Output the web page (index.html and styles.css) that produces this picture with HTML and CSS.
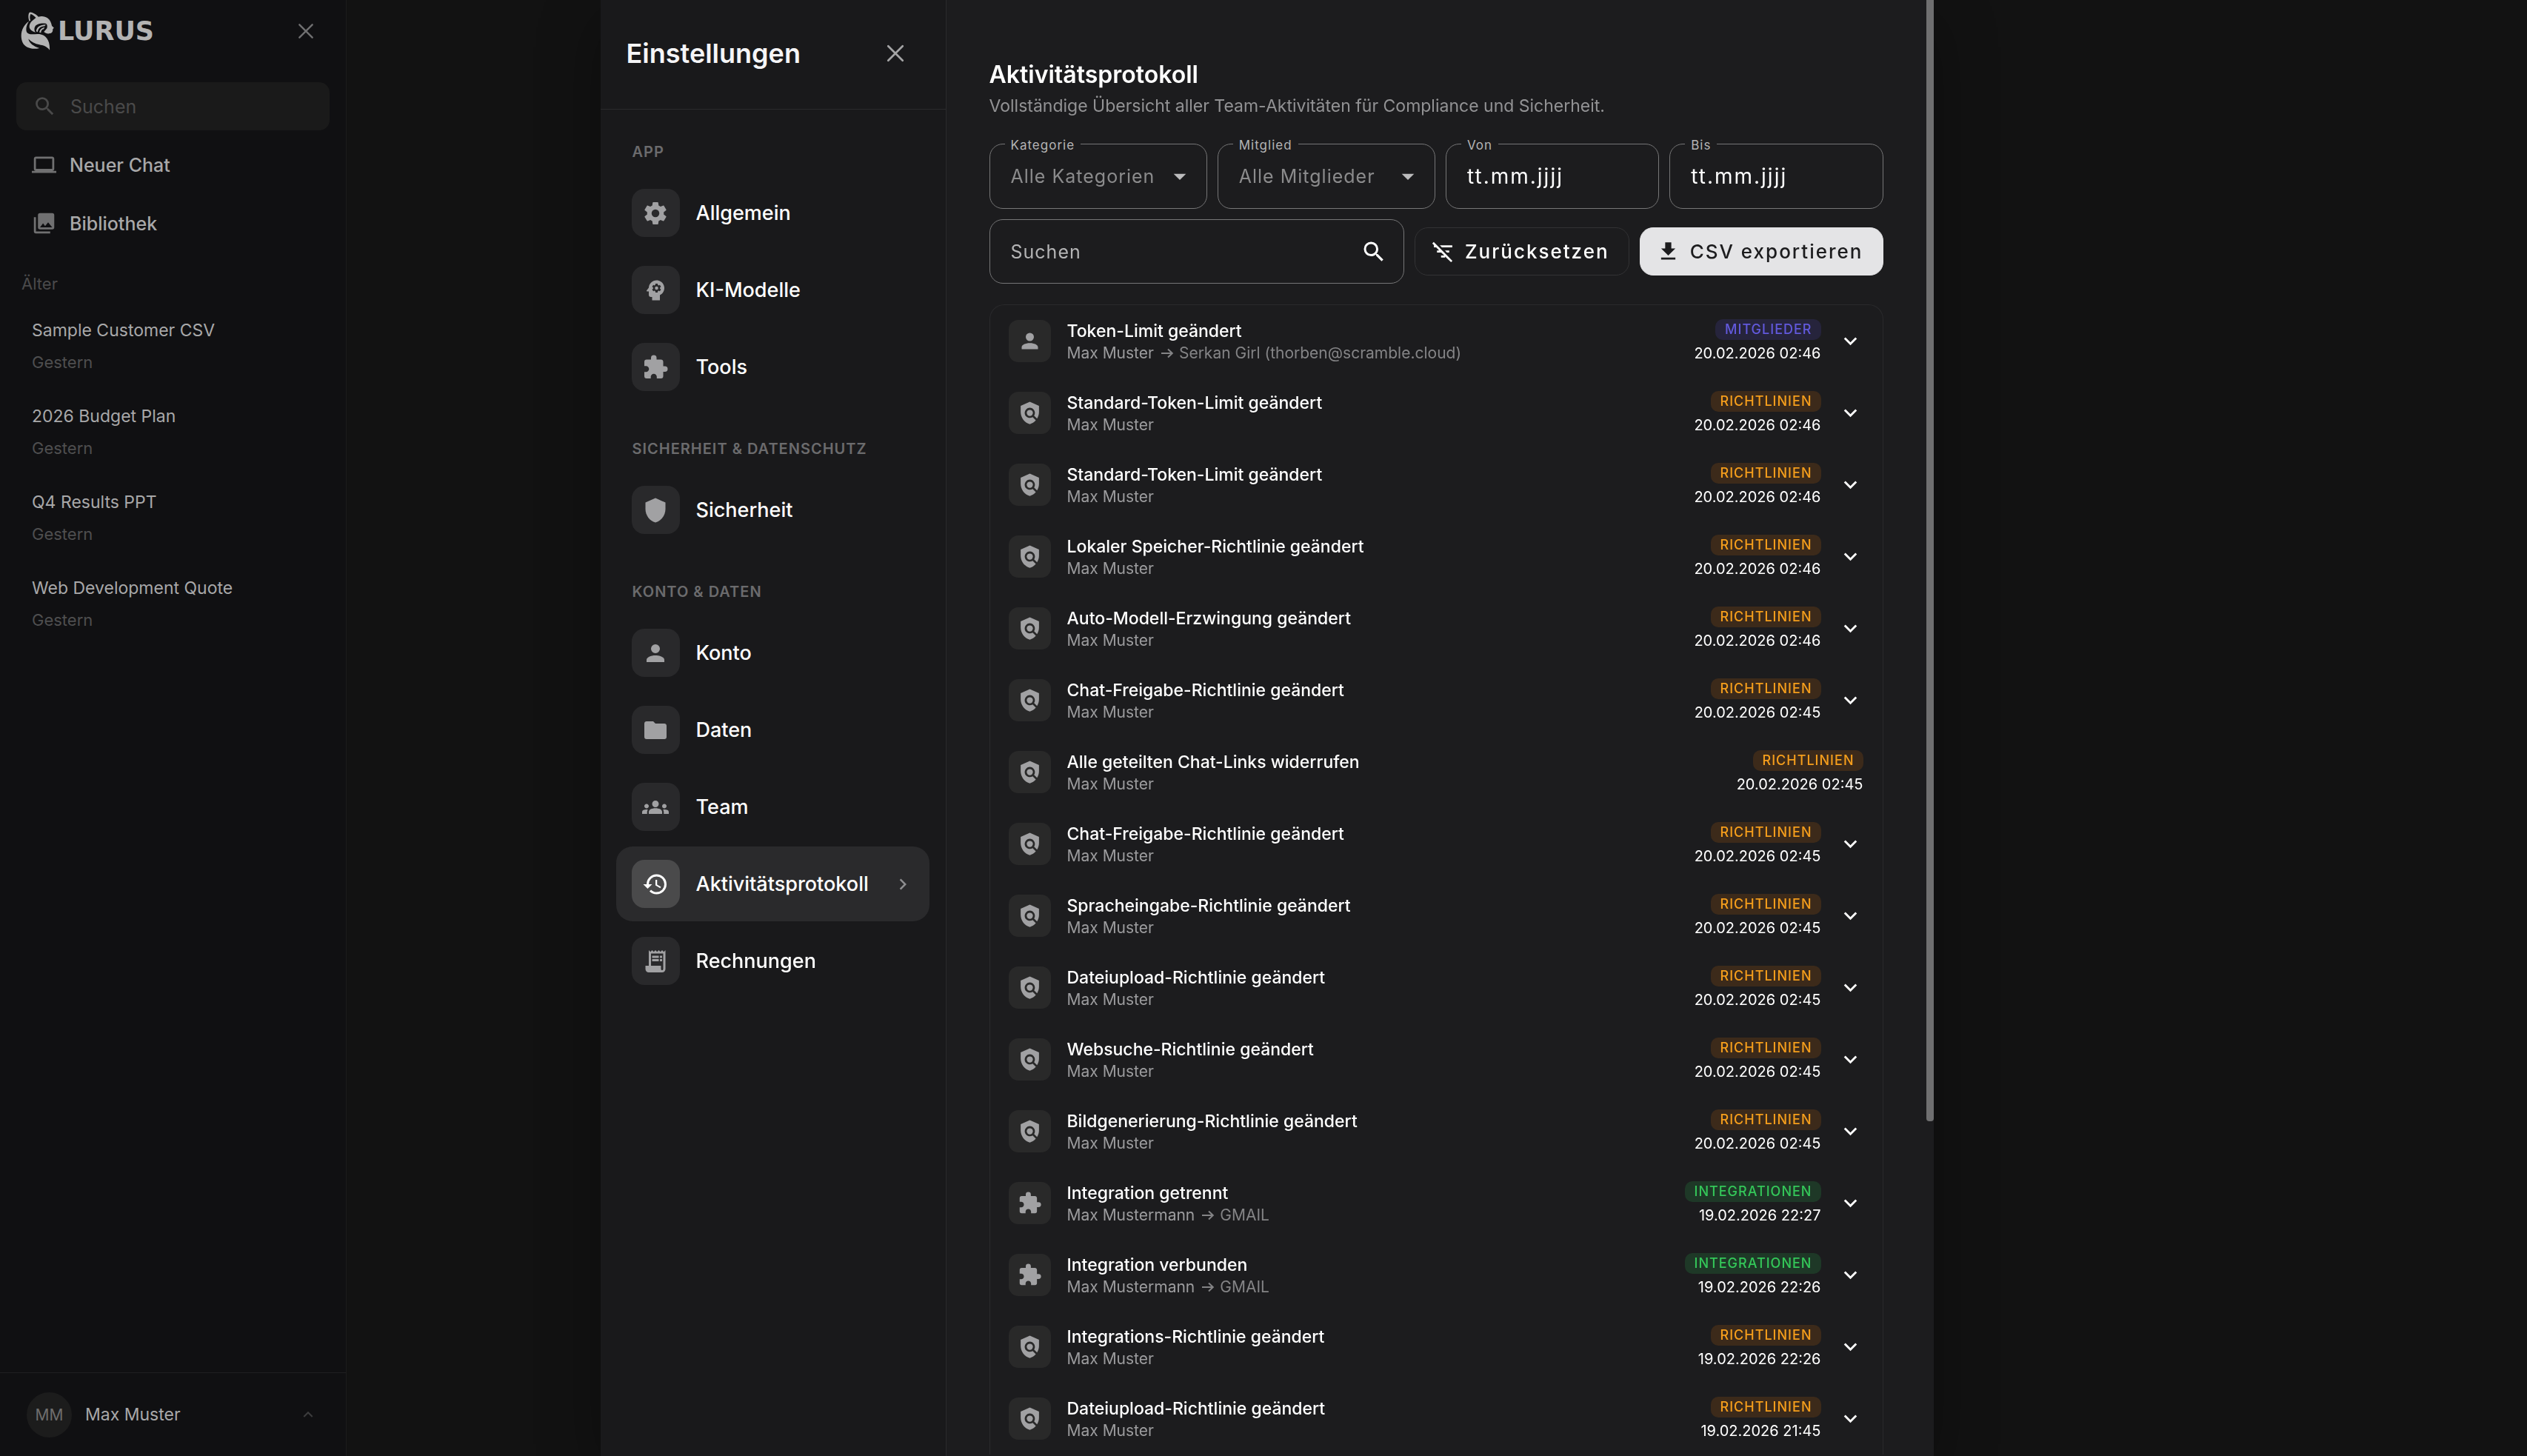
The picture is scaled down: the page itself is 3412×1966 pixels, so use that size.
FILE: index.html
```html
<!DOCTYPE html>
<html lang="de">
<head>
    <meta charset="UTF-8">
    <meta name="viewport" content="width=device-width, initial-scale=1.0">
    <title>Einstellungen - Aktivitätsprotokoll</title>
    <link rel="stylesheet" href="styles.css">
</head>
<body>
    <!-- Icon sprite -->
    <svg class="sprite" aria-hidden="true">
        <symbol id="i-close" viewBox="0 0 24 24"><path d="M5.5 5.5l13 13M18.5 5.5l-13 13" fill="none" stroke="currentColor" stroke-width="1.8" stroke-linecap="round"/></symbol>
        <symbol id="i-search" viewBox="0 0 24 24"><path d="M9.5,3A6.5,6.5 0 0,1 16,9.5C16,11.11 15.41,12.59 14.44,13.73L14.71,14H15.5L20.5,19L19,20.5L14,15.5V14.71L13.73,14.44C12.59,15.41 11.11,16 9.5,16A6.5,6.5 0 0,1 3,9.5A6.5,6.5 0 0,1 9.5,3M9.5,5C7,5 5,7 5,9.5C5,12 7,14 9.5,14C12,14 14,12 14,9.5C14,7 12,5 9.5,5Z"/></symbol>
        <symbol id="i-laptop" viewBox="0 0 24 24"><path d="M4,6H20V16H4M20,18A2,2 0 0,0 22,16V6C22,4.89 21.1,4 20,4H4C2.89,4 2,4.89 2,6V16A2,2 0 0,0 4,18H0V20H24V18H20Z"/></symbol>
        <symbol id="i-images" viewBox="0 0 24 24"><path d="M22,16V4A2,2 0 0,0 20,2H8A2,2 0 0,0 6,4V16A2,2 0 0,0 8,18H20A2,2 0 0,0 22,16M11,12L13.03,14.71L16,11L20,16H8M2,6V20A2,2 0 0,0 4,22H18V20H4V6"/></symbol>
        <symbol id="i-cog" viewBox="0 0 24 24"><path d="M12,15.5A3.5,3.5 0 0,1 8.5,12A3.5,3.5 0 0,1 12,8.5A3.5,3.5 0 0,1 15.5,12A3.5,3.5 0 0,1 12,15.5M19.43,12.97C19.47,12.65 19.5,12.33 19.5,12C19.5,11.67 19.47,11.34 19.43,11L21.54,9.37C21.73,9.22 21.78,8.95 21.66,8.73L19.66,5.27C19.54,5.05 19.27,4.96 19.05,5.05L16.56,6.05C16.04,5.66 15.5,5.32 14.87,5.07L14.5,2.42C14.46,2.18 14.25,2 14,2H10C9.75,2 9.54,2.18 9.5,2.42L9.13,5.07C8.5,5.32 7.96,5.66 7.44,6.05L4.95,5.05C4.73,4.96 4.46,5.05 4.34,5.27L2.34,8.73C2.21,8.95 2.27,9.22 2.46,9.37L4.57,11C4.53,11.34 4.5,11.67 4.5,12C4.5,12.33 4.53,12.65 4.57,12.97L2.46,14.63C2.27,14.78 2.21,15.05 2.34,15.27L4.34,18.73C4.46,18.95 4.73,19.03 4.95,18.95L7.44,17.94C7.96,18.34 8.5,18.68 9.13,18.93L9.5,21.58C9.54,21.82 9.75,22 10,22H14C14.25,22 14.46,21.82 14.5,21.58L14.87,18.93C15.5,18.67 16.04,18.34 16.56,17.94L19.05,18.95C19.27,19.03 19.54,18.95 19.66,18.73L21.66,15.27C21.78,15.05 21.73,14.78 21.54,14.63L19.43,12.97Z"/></symbol>
        <symbol id="i-head" viewBox="0 0 24 24"><path fill-rule="evenodd" d="M13,3C9.23,3 6.19,5.95 6,9.66L4.08,12.19C3.84,12.5 4.08,13 4.5,13H6V16A2,2 0 0,0 8,18H9V21H16V16.31C18.37,15.19 20,12.8 20,10C20,6.14 16.88,3 13,3M16,10C16,10.13 16,10.26 16,10.39L16.83,11.05C16.91,11.11 16.93,11.21 16.88,11.3L16.08,12.69C16.03,12.78 15.93,12.81 15.84,12.78L14.84,12.38C14.63,12.54 14.41,12.67 14.16,12.77L14,13.83C14,13.93 13.91,14 13.81,14H12.19C12.09,14 12,13.93 12,13.83L11.84,12.77C11.59,12.67 11.37,12.54 11.16,12.38L10.16,12.78C10.07,12.81 9.97,12.78 9.92,12.69L9.12,11.3C9.07,11.21 9.09,11.11 9.17,11.05L10,10.39C10,10.26 10,10.13 10,10C10,9.87 10,9.74 10,9.61L9.17,8.95C9.09,8.89 9.07,8.79 9.12,8.7L9.92,7.31C9.97,7.22 10.07,7.19 10.16,7.22L11.16,7.62C11.37,7.46 11.59,7.33 11.84,7.23L12,6.17C12,6.07 12.09,6 12.19,6H13.81C13.91,6 14,6.07 14,6.17L14.16,7.23C14.41,7.33 14.63,7.46 14.84,7.62L15.84,7.22C15.93,7.19 16.03,7.22 16.08,7.31L16.88,8.7C16.93,8.79 16.91,8.89 16.83,8.95L16,9.61C16,9.74 16,9.87 16,10M14.5,10A1.5,1.5 0 1,0 11.5,10A1.5,1.5 0 1,0 14.5,10Z"/></symbol>
        <symbol id="i-puzzle" viewBox="0 0 24 24"><path d="M20.5,11H19V7C19,5.89 18.1,5 17,5H13V3.5A2.5,2.5 0 0,0 10.5,1A2.5,2.5 0 0,0 8,3.5V5H4A2,2 0 0,0 2,7V10.8H3.5C5,10.8 6.2,12 6.2,13.5C6.2,15 5,16.2 3.5,16.2H2V20A2,2 0 0,0 4,22H7.8V20.5C7.8,19 9,17.8 10.5,17.8C12,17.8 13.2,19 13.2,20.5V22H17A2,2 0 0,0 19,20V16H20.5A2.5,2.5 0 0,0 23,13.5A2.5,2.5 0 0,0 20.5,11Z"/></symbol>
        <symbol id="i-shield" viewBox="0 0 24 24"><path d="M12,1L3,5V11C3,16.55 6.84,21.74 12,23C17.16,21.74 21,16.55 21,11V5L12,1Z"/></symbol>
        <symbol id="i-account" viewBox="0 0 24 24"><path d="M12,4A4,4 0 0,1 16,8A4,4 0 0,1 12,12A4,4 0 0,1 8,8A4,4 0 0,1 12,4M12,14C16.42,14 20,15.79 20,18V20H4V18C4,15.79 7.58,14 12,14Z"/></symbol>
        <symbol id="i-folder" viewBox="0 0 24 24"><path d="M10,4H4C2.89,4 2,4.89 2,6V18A2,2 0 0,0 4,20H20A2,2 0 0,0 22,18V8C22,6.89 21.1,6 20,6H12L10,4Z"/></symbol>
        <symbol id="i-groups" viewBox="0 0 24 24"><path d="M12 12.75c1.63 0 3.07.39 4.24.9 1.08.48 1.76 1.56 1.76 2.73V18H6v-1.61c0-1.18.68-2.26 1.76-2.73 1.17-.52 2.61-.91 4.24-.91zM4 13c1.1 0 2-.9 2-2s-.9-2-2-2-2 .9-2 2 .9 2 2 2zm1.13 1.1c-.37-.06-.74-.1-1.13-.1-.99 0-1.93.21-2.78.58C.48 14.9 0 15.62 0 16.43V18h4.5v-1.61c0-.83.23-1.61.63-2.29zM20 13c1.1 0 2-.9 2-2s-.9-2-2-2-2 .9-2 2 .9 2 2 2zm4 3.43c0-.81-.48-1.53-1.22-1.85-.85-.37-1.79-.58-2.78-.58-.39 0-.76.04-1.13.1.4.68.63 1.46.63 2.29V18H24v-1.57zM12 6c1.66 0 3 1.34 3 3s-1.34 3-3 3-3-1.34-3-3 1.34-3 3-3z"/></symbol>
        <symbol id="i-history" viewBox="0 0 24 24"><path d="M13.5,8H12V13L16.28,15.54L17,14.33L13.5,12.25V8M13,3A9,9 0 0,0 4,12H1L4.96,16.03L9,12H6A7,7 0 0,1 13,5A7,7 0 0,1 20,12A7,7 0 0,1 13,19C11.07,19 9.32,18.21 8.06,16.94L6.64,18.36C8.27,20 10.5,21 13,21A9,9 0 0,0 22,12A9,9 0 0,0 13,3"/></symbol>
        <symbol id="i-receipt" viewBox="0 0 24 24"><path d="M19.5 3.5L18 2l-1.5 1.5L15 2l-1.5 1.5L12 2l-1.5 1.5L9 2 7.5 3.5 6 2v14H3v3c0 1.66 1.34 3 3 3h12c1.66 0 3-1.34 3-3V2l-1.5 1.5zM19 19c0 .55-.45 1-1 1s-1-.45-1-1v-3H8V5h11v14zM9 7h6v2H9zM16 7h2v2h-2zM9 10h6v2H9zM16 10h2v2h-2z"/></symbol>
        <symbol id="i-policy" viewBox="0 0 24 24"><path d="M21 5l-9-4-9 4v6c0 5.55 3.84 10.74 9 12 2.3-.56 4.33-1.9 5.88-3.71l-3.12-3.12c-1.94 1.29-4.58 1.07-6.29-.64-1.95-1.95-1.95-5.12 0-7.07 1.95-1.95 5.12-1.95 7.07 0 1.71 1.71 1.92 4.35.64 6.29l2.9 2.9C20.29 15.69 21 13.38 21 11V5z"/><circle cx="12" cy="12" r="3"/></symbol>
        <symbol id="i-chevron-right" viewBox="0 0 24 24"><path d="M8.59,16.58L13.17,12L8.59,7.41L10,6L16,12L10,18L8.59,16.58Z"/></symbol>
        <symbol id="i-chevron-down" viewBox="0 0 24 24"><path d="M7.41,8.58L12,13.17L16.59,8.58L18,10L12,16L6,10L7.41,8.58Z"/></symbol>
        <symbol id="i-chevron-up" viewBox="0 0 24 24"><path d="M7.41,15.41L12,10.83L16.59,15.41L18,14L12,8L6,14L7.41,15.41Z"/></symbol>
        <symbol id="i-menu-down" viewBox="0 0 24 24"><path d="M7,10L12,15L17,10H7Z"/></symbol>
        <symbol id="i-filter-off" viewBox="0 0 24 24"><path d="M10.83 8H21V6H8.83l2 2zm5 5H18v-2h-4.17l2 2zM14 16.83V18h-4v-2h3.17l-3-3H6v-2h2.17l-3-3H3V6h.17L1.39 4.22 2.8 2.81l18.38 18.38-1.41 1.41L14 16.83z"/></symbol>
        <symbol id="i-download" viewBox="0 0 24 24"><path d="M5,20H19V18H5M19,9H15V3H9V9H5L12,16L19,9Z"/></symbol>
        <symbol id="i-arrow" viewBox="0 0 18 16"><path d="M1 8h15M10 2.5L15.8 8 10 13.5" fill="none" stroke="currentColor" stroke-width="2"/></symbol>
    </svg>

    <div class="app">
        <!-- Chat sidebar -->
        <aside class="sidebar">
            <div class="sidebar-header">
                <a class="logo" href="#">
                    <svg class="logo-mark" viewBox="86 50 132 154" aria-hidden="true">
                        <path fill-rule="evenodd" d="M120 88C115 76 115 61 119 54C121 50 126 51 131 53C142 57 150 63 156 70C168 65 184 68 193 75C203 83 207 92 210 106L218 114L213 120C215 128 210 135 202 136C194 139 185 136 178 130L190 116C193 108 191 99 185 97C170 93 150 99 144 106C138 114 139 124 144 132C131 128 122 121 120 112C119 103 123 94 129 88L146 74C140 66 131 60 125 59C121 66 121 76 124 84Z"/>
                        <path d="M147 128C148 112 162 101 186 101L180 108C166 108 155 115 153 131ZM160 132C161 121 169 114 181 112L177 119C170 120 167 125 166 134Z"/>
                        <path d="M118 88C108 104 104 122 110 132C120 145 140 137 160 139C186 142 203 164 201 203C190 187 174 184 160 181C143 178 127 170 116 158C120 176 137 188 160 195C132 202 103 194 93 173C80 143 90 107 118 88Z"/>
                    </svg>
                    <span class="logo-text">LURUS</span>
                </a>
                <button class="icon-button" type="button" aria-label="Seitenleiste schließen"><svg class="icon-close"><use href="#i-close"/></svg></button>
            </div>

            <label class="sidebar-search">
                <svg class="icon"><use href="#i-search"/></svg>
                <input type="text" placeholder="Suchen" aria-label="Chats durchsuchen">
            </label>

            <nav class="main-nav">
                <a href="#"><svg class="icon"><use href="#i-laptop"/></svg>Neuer Chat</a>
                <a href="#"><svg class="icon"><use href="#i-images"/></svg>Bibliothek</a>
            </nav>

            <h3 class="history-label">Älter</h3>
            <nav class="history">
                <a href="#"><span class="history-title">Sample Customer CSV</span><span class="history-date">Gestern</span></a>
                <a href="#"><span class="history-title">2026 Budget Plan</span><span class="history-date">Gestern</span></a>
                <a href="#"><span class="history-title">Q4 Results PPT</span><span class="history-date">Gestern</span></a>
                <a href="#"><span class="history-title">Web Development Quote</span><span class="history-date">Gestern</span></a>
            </nav>

            <button class="user" type="button">
                <span class="avatar">MM</span>
                <span class="user-name">Max Muster</span>
                <svg class="icon-up"><use href="#i-chevron-up"/></svg>
            </button>
        </aside>
        <main class="chat"></main>
    </div>

    <!-- Settings dialog -->
    <div class="overlay">
        <div class="modal" role="dialog" aria-labelledby="settings-title">
            <div class="settings">
                <div class="settings-header">
                    <h1 id="settings-title">Einstellungen</h1>
                    <button class="icon-button" type="button" aria-label="Schließen"><svg class="icon-close"><use href="#i-close"/></svg></button>
                </div>
                <nav class="settings-nav">
                    <h2>APP</h2>
                    <a href="#"><span class="tile"><svg class="icon"><use href="#i-cog"/></svg></span>Allgemein</a>
                    <a href="#"><span class="tile"><svg class="icon"><use href="#i-head"/></svg></span>KI-Modelle</a>
                    <a href="#"><span class="tile"><svg class="icon"><use href="#i-puzzle"/></svg></span>Tools</a>
                    <h2>SICHERHEIT &amp; DATENSCHUTZ</h2>
                    <a href="#"><span class="tile"><svg class="icon"><use href="#i-shield"/></svg></span>Sicherheit</a>
                    <h2>KONTO &amp; DATEN</h2>
                    <a href="#"><span class="tile"><svg class="icon"><use href="#i-account"/></svg></span>Konto</a>
                    <a href="#"><span class="tile"><svg class="icon"><use href="#i-folder"/></svg></span>Daten</a>
                    <a href="#"><span class="tile"><svg class="icon"><use href="#i-groups"/></svg></span>Team</a>
                    <a href="#" class="active"><span class="tile"><svg class="icon"><use href="#i-history"/></svg></span>Aktivitätsprotokoll<svg class="icon-next"><use href="#i-chevron-right"/></svg></a>
                    <a href="#"><span class="tile"><svg class="icon"><use href="#i-receipt"/></svg></span>Rechnungen</a>
                </nav>
            </div>

            <div class="content">
                <h2 class="content-title">Aktivitätsprotokoll</h2>
                <p class="content-text">Vollständige Übersicht aller Team-Aktivitäten für Compliance und Sicherheit.</p>

                <form class="filters">
                    <div class="fields">
                        <div class="field">
                            <label for="category">Kategorie</label>
                            <select id="category"><option>Alle Kategorien</option></select>
                            <svg class="caret"><use href="#i-menu-down"/></svg>
                        </div>
                        <div class="field">
                            <label for="member">Mitglied</label>
                            <select id="member"><option>Alle Mitglieder</option></select>
                            <svg class="caret"><use href="#i-menu-down"/></svg>
                        </div>
                        <div class="field">
                            <label for="from">Von</label>
                            <input class="date" type="text" id="from" placeholder="tt.mm.jjjj">
                        </div>
                        <div class="field">
                            <label for="to">Bis</label>
                            <input class="date" type="text" id="to" placeholder="tt.mm.jjjj">
                        </div>
                    </div>
                    <div class="actions">
                        <div class="field search">
                            <input type="text" placeholder="Suchen" aria-label="Suchen">
                            <svg class="icon-search"><use href="#i-search"/></svg>
                        </div>
                        <button class="button" type="reset"><svg class="icon"><use href="#i-filter-off"/></svg>Zurücksetzen</button>
                        <button class="button primary" type="button"><svg class="icon"><use href="#i-download"/></svg>CSV exportieren</button>
                    </div>
                </form>

                <!-- Activity log -->
                <ul class="log">
                    <li>
                        <span class="log-icon"><svg class="icon"><use href="#i-account"/></svg></span>
                        <div class="log-text"><strong>Token-Limit geändert</strong><p>Max Muster <span class="target"><svg class="arrow"><use href="#i-arrow"/></svg> Serkan Girl (thorben@scramble.cloud)</span></p></div>
                        <div class="log-meta"><span class="badge members">MITGLIEDER</span><time>20.02.2026 02:46</time></div>
                        <button class="expand" type="button" aria-label="Details"><svg><use href="#i-chevron-down"/></svg></button>
                    </li>
                    <li>
                        <span class="log-icon"><svg class="icon"><use href="#i-policy"/></svg></span>
                        <div class="log-text"><strong>Standard-Token-Limit geändert</strong><p>Max Muster</p></div>
                        <div class="log-meta"><span class="badge policies">RICHTLINIEN</span><time>20.02.2026 02:46</time></div>
                        <button class="expand" type="button" aria-label="Details"><svg><use href="#i-chevron-down"/></svg></button>
                    </li>
                    <li>
                        <span class="log-icon"><svg class="icon"><use href="#i-policy"/></svg></span>
                        <div class="log-text"><strong>Standard-Token-Limit geändert</strong><p>Max Muster</p></div>
                        <div class="log-meta"><span class="badge policies">RICHTLINIEN</span><time>20.02.2026 02:46</time></div>
                        <button class="expand" type="button" aria-label="Details"><svg><use href="#i-chevron-down"/></svg></button>
                    </li>
                    <li>
                        <span class="log-icon"><svg class="icon"><use href="#i-policy"/></svg></span>
                        <div class="log-text"><strong>Lokaler Speicher-Richtlinie geändert</strong><p>Max Muster</p></div>
                        <div class="log-meta"><span class="badge policies">RICHTLINIEN</span><time>20.02.2026 02:46</time></div>
                        <button class="expand" type="button" aria-label="Details"><svg><use href="#i-chevron-down"/></svg></button>
                    </li>
                    <li>
                        <span class="log-icon"><svg class="icon"><use href="#i-policy"/></svg></span>
                        <div class="log-text"><strong>Auto-Modell-Erzwingung geändert</strong><p>Max Muster</p></div>
                        <div class="log-meta"><span class="badge policies">RICHTLINIEN</span><time>20.02.2026 02:46</time></div>
                        <button class="expand" type="button" aria-label="Details"><svg><use href="#i-chevron-down"/></svg></button>
                    </li>
                    <li>
                        <span class="log-icon"><svg class="icon"><use href="#i-policy"/></svg></span>
                        <div class="log-text"><strong>Chat-Freigabe-Richtlinie geändert</strong><p>Max Muster</p></div>
                        <div class="log-meta"><span class="badge policies">RICHTLINIEN</span><time>20.02.2026 02:45</time></div>
                        <button class="expand" type="button" aria-label="Details"><svg><use href="#i-chevron-down"/></svg></button>
                    </li>
                    <li>
                        <span class="log-icon"><svg class="icon"><use href="#i-policy"/></svg></span>
                        <div class="log-text"><strong>Alle geteilten Chat-Links widerrufen</strong><p>Max Muster</p></div>
                        <div class="log-meta"><span class="badge policies">RICHTLINIEN</span><time>20.02.2026 02:45</time></div>
                    </li>
                    <li>
                        <span class="log-icon"><svg class="icon"><use href="#i-policy"/></svg></span>
                        <div class="log-text"><strong>Chat-Freigabe-Richtlinie geändert</strong><p>Max Muster</p></div>
                        <div class="log-meta"><span class="badge policies">RICHTLINIEN</span><time>20.02.2026 02:45</time></div>
                        <button class="expand" type="button" aria-label="Details"><svg><use href="#i-chevron-down"/></svg></button>
                    </li>
                    <li>
                        <span class="log-icon"><svg class="icon"><use href="#i-policy"/></svg></span>
                        <div class="log-text"><strong>Spracheingabe-Richtlinie geändert</strong><p>Max Muster</p></div>
                        <div class="log-meta"><span class="badge policies">RICHTLINIEN</span><time>20.02.2026 02:45</time></div>
                        <button class="expand" type="button" aria-label="Details"><svg><use href="#i-chevron-down"/></svg></button>
                    </li>
                    <li>
                        <span class="log-icon"><svg class="icon"><use href="#i-policy"/></svg></span>
                        <div class="log-text"><strong>Dateiupload-Richtlinie geändert</strong><p>Max Muster</p></div>
                        <div class="log-meta"><span class="badge policies">RICHTLINIEN</span><time>20.02.2026 02:45</time></div>
                        <button class="expand" type="button" aria-label="Details"><svg><use href="#i-chevron-down"/></svg></button>
                    </li>
                    <li>
                        <span class="log-icon"><svg class="icon"><use href="#i-policy"/></svg></span>
                        <div class="log-text"><strong>Websuche-Richtlinie geändert</strong><p>Max Muster</p></div>
                        <div class="log-meta"><span class="badge policies">RICHTLINIEN</span><time>20.02.2026 02:45</time></div>
                        <button class="expand" type="button" aria-label="Details"><svg><use href="#i-chevron-down"/></svg></button>
                    </li>
                    <li>
                        <span class="log-icon"><svg class="icon"><use href="#i-policy"/></svg></span>
                        <div class="log-text"><strong>Bildgenerierung-Richtlinie geändert</strong><p>Max Muster</p></div>
                        <div class="log-meta"><span class="badge policies">RICHTLINIEN</span><time>20.02.2026 02:45</time></div>
                        <button class="expand" type="button" aria-label="Details"><svg><use href="#i-chevron-down"/></svg></button>
                    </li>
                    <li>
                        <span class="log-icon"><svg class="icon"><use href="#i-puzzle"/></svg></span>
                        <div class="log-text"><strong>Integration getrennt</strong><p>Max Mustermann <span class="target"><svg class="arrow"><use href="#i-arrow"/></svg> GMAIL</span></p></div>
                        <div class="log-meta"><span class="badge integrations">INTEGRATIONEN</span><time>19.02.2026 22:27</time></div>
                        <button class="expand" type="button" aria-label="Details"><svg><use href="#i-chevron-down"/></svg></button>
                    </li>
                    <li>
                        <span class="log-icon"><svg class="icon"><use href="#i-puzzle"/></svg></span>
                        <div class="log-text"><strong>Integration verbunden</strong><p>Max Mustermann <span class="target"><svg class="arrow"><use href="#i-arrow"/></svg> GMAIL</span></p></div>
                        <div class="log-meta"><span class="badge integrations">INTEGRATIONEN</span><time>19.02.2026 22:26</time></div>
                        <button class="expand" type="button" aria-label="Details"><svg><use href="#i-chevron-down"/></svg></button>
                    </li>
                    <li>
                        <span class="log-icon"><svg class="icon"><use href="#i-policy"/></svg></span>
                        <div class="log-text"><strong>Integrations-Richtlinie geändert</strong><p>Max Muster</p></div>
                        <div class="log-meta"><span class="badge policies">RICHTLINIEN</span><time>19.02.2026 22:26</time></div>
                        <button class="expand" type="button" aria-label="Details"><svg><use href="#i-chevron-down"/></svg></button>
                    </li>
                    <li>
                        <span class="log-icon"><svg class="icon"><use href="#i-policy"/></svg></span>
                        <div class="log-text"><strong>Dateiupload-Richtlinie geändert</strong><p>Max Muster</p></div>
                        <div class="log-meta"><span class="badge policies">RICHTLINIEN</span><time>19.02.2026 21:45</time></div>
                        <button class="expand" type="button" aria-label="Details"><svg><use href="#i-chevron-down"/></svg></button>
                    </li>
                </ul>
            </div>
            <div class="scrollbar"><div class="scrollbar-thumb"></div></div>
        </div>
    </div>
</body>
</html>
```
FILE: styles.css
```css
* {
    box-sizing: border-box;
}

body {
    font-family: Inter, "Liberation Sans", sans-serif;
    font-size: 23px;
    background-color: #121212;
    color: #ffffff;
    margin: 0;
    height: 100vh;
    overflow: hidden;
}

h1, h2, h3, p, ul {
    margin: 0;
    padding: 0;
    font-weight: 400;
}

a {
    color: inherit;
    text-decoration: none;
}

button,
input,
select {
    font-family: inherit;
    background: none;
    border: none;
    outline: none;
    margin: 0;
    padding: 0;
    color: inherit;
}

button {
    cursor: pointer;
}

svg {
    display: block;
    flex-shrink: 0;
    fill: currentColor;
}

.sprite {
    display: none;
}

.icon {
    width: 33px;
    height: 33px;
}

/* Sidebar */
.app {
    display: flex;
    height: 100vh;
}

.chat {
    flex: 1;
}

.sidebar {
    width: 468px;
    display: flex;
    flex-direction: column;
    background-color: #101012;
    border-right: 1px solid #1c1c1c;
    color: #a8a8a9;
}

.sidebar-header {
    display: flex;
    justify-content: space-between;
    align-items: center;
    padding: 16px 38px 0 28px;
}

.sidebar-header .icon-button {
    color: #707071;
}

.sidebar-header .icon-close {
    width: 32px;
    height: 32px;
}

.logo {
    display: flex;
    align-items: center;
    gap: 5px;
    color: #b3b3b3;
}

.logo-mark {
    width: 45px;
    height: 52px;
}

.logo-text {
    font-family: "DejaVu Sans", sans-serif;
    font-size: 35px;
    font-weight: bold;
    line-height: 40px;
}

.sidebar-search {
    display: flex;
    align-items: center;
    gap: 18px;
    height: 65px;
    margin: 43px 22px 0;
    padding: 0 22px;
    border-radius: 14px;
    background-color: #1a1a1a;
    color: #4a4a4a;
}

.sidebar-search input {
    flex: 1;
    min-width: 0;
    font-size: 25px;
}

.sidebar-search input::placeholder {
    color: #4a4a4a;
    opacity: 1;
}

.main-nav {
    margin-top: 7px;
}

.main-nav a {
    display: flex;
    align-items: center;
    gap: 18px;
    height: 79px;
    padding: 0 43px;
    font-size: 25px;
    font-weight: 500;
}

.main-nav .icon {
    color: #707071;
}

.history-label {
    margin: 27px 29px 32px;
    font-size: 22px;
    line-height: 30px;
    color: #4a4a4b;
}

.history {
    flex: 1;
}

.history a {
    display: flex;
    flex-direction: column;
    gap: 12px;
    margin-bottom: 42px;
    padding: 0 43px;
}

.history-title {
    font-size: 23px;
    line-height: 32px;
}

.history-date {
    font-size: 22px;
    line-height: 30px;
    color: #4e4e4f;
}

.user {
    display: flex;
    align-items: center;
    height: 113px;
    padding: 0 38px 0 36px;
    border-top: 1px solid #1f1f20;
    font-size: 23px;
    text-align: left;
}

.avatar {
    width: 61px;
    line-height: 61px;
    margin-right: 18px;
    border-radius: 50%;
    background-color: #1c1c1c;
    color: #6e6e6e;
    font-size: 21px;
    text-align: center;
}

.user-name {
    flex: 1;
}

.icon-up {
    width: 26px;
    height: 26px;
    color: #3c3c3d;
}

/* Modal */
.overlay {
    position: fixed;
    inset: 0;
    display: flex;
    justify-content: center;
    padding-left: 9px;
}

.modal {
    display: flex;
    width: 100%;
    max-width: 1800px;
    height: 100%;
    overflow: hidden;
    background-color: #1c1c1e;
    box-shadow: 0 24px 80px rgba(0, 0, 0, 0.3);
}

.settings {
    width: 467px;
    background-color: #19191b;
    border-right: 1px solid #2a2a2c;
}

.settings-header {
    display: flex;
    justify-content: space-between;
    align-items: center;
    height: 148px;
    padding: 0 50px 3px 35px;
    border-bottom: 1px solid #2a2a2c;
}

.settings-header h1 {
    font-size: 36px;
    font-weight: 600;
    line-height: 44px;
    color: #f5f5f7;
}

.settings-header .icon-button {
    color: #a5a5a6;
}

.settings-header .icon-close {
    width: 36px;
    height: 36px;
}

.settings-nav {
    padding: 45px 22px 0 21px;
}

.settings-nav h2 {
    margin: 48px 22px 20px;
    font-size: 20px;
    font-weight: 600;
    line-height: 24px;
    letter-spacing: 1px;
    color: #6b6b6d;
}

.settings-nav h2:first-child {
    margin-top: 0;
}

.settings-nav a {
    display: flex;
    align-items: center;
    height: 101px;
    padding: 0 21px;
    border-radius: 22px;
    font-size: 27px;
    font-weight: 500;
}

.settings-nav a + a {
    margin-top: 3px;
}

.tile {
    display: flex;
    justify-content: center;
    align-items: center;
    width: 65px;
    height: 65px;
    margin-right: 22px;
    border-radius: 17px;
    background-color: #29292b;
    color: #a1a1a3;
}

.tile .icon {
    width: 36px;
    height: 36px;
}

.settings-nav .active {
    background-color: #2a2a2c;
}

.active .tile {
    background-color: #4a4a4b;
    color: #ffffff;
}

.icon-next {
    width: 30px;
    height: 30px;
    margin-left: auto;
    color: #8e8e90;
}

/* Content */
.content {
    flex: 1;
    min-width: 0;
    padding: 81px 58px 0;
}

.content-title {
    font-size: 32px;
    font-weight: 600;
    line-height: 40px;
}

.content-text {
    margin-top: 6px;
    line-height: 32px;
    color: #929294;
}

.filters {
    display: flex;
    flex-direction: column;
    gap: 14px;
    margin: 35px 0 28px;
}

.fields {
    display: grid;
    grid-template-columns: 49fr 49fr 48fr 48fr;
    gap: 14px;
}

.field {
    position: relative;
    display: flex;
    align-items: center;
    height: 88px;
    border: 1px solid #767677;
    border-radius: 18px;
    font-size: 25px;
    letter-spacing: 1px;
}

/* label sits on the top border */
.field label {
    position: absolute;
    top: -11px;
    left: 20px;
    padding: 0 8px;
    background-color: #1c1c1e;
    font-size: 17px;
    line-height: 24px;
    color: #b4b4b5;
}

.field select,
.field input {
    flex: 1;
    width: 100%;
    min-width: 0;
    height: 100%;
    padding-left: 28px;
    font-size: 25px;
    letter-spacing: 1px;
    appearance: none;
}

.field select {
    color: #8b8b8c;
}

.field .date {
    font-size: 28px;
    letter-spacing: 2px;
}

.field input::placeholder {
    color: #b4b4b5;
    opacity: 1;
}

.field .date::placeholder {
    color: #ffffff;
}

.caret {
    position: absolute;
    right: 16px;
    width: 40px;
    height: 40px;
    color: #bcbcbd;
    pointer-events: none;
}

.actions {
    display: flex;
    align-items: center;
    gap: 14px;
}

.search {
    flex: 1;
    height: 87px;
    padding-right: 22px;
}

.icon-search {
    width: 36px;
    height: 36px;
}

.button {
    display: flex;
    align-items: center;
    gap: 13px;
    height: 65px;
    padding: 0 26px 0 21px;
    border: 1px solid #333335;
    border-radius: 18px;
    font-size: 26px;
    font-weight: 500;
    letter-spacing: 2px;
}

.primary {
    border-color: #e4e4e6;
    background-color: #e4e4e6;
    color: #1c1c1e;
}

/* Log list */
.log {
    list-style-type: none;
    border: 1px solid #2a2a2c;
    border-bottom: none;
    border-radius: 20px 20px 0 0;
}

.log li {
    display: flex;
    align-items: center;
    height: 97px;
    padding: 0 26px 0 25px;
}

.log-icon {
    display: flex;
    justify-content: center;
    align-items: center;
    width: 57px;
    height: 57px;
    margin-right: 22px;
    border-radius: 13px;
    background-color: #292929;
    color: #a1a1a3;
}

.log-text {
    flex: 1;
}

.log-text strong {
    display: block;
    font-size: 23px;
    font-weight: 500;
    line-height: 32px;
}

.log-text p {
    display: flex;
    align-items: center;
    gap: 9px;
    font-size: 21px;
    line-height: 28px;
    color: #9c9c9e;
}

.target {
    display: flex;
    align-items: center;
    gap: 7px;
    color: #848486;
}

.arrow {
    width: 18px;
    height: 16px;
}

.log-meta {
    display: flex;
    flex-direction: column;
    align-items: flex-end;
    gap: 4px;
}

.log-meta time {
    font-size: 20px;
    line-height: 28px;
}

.badge {
    padding: 0 12px 0 13px;
    border-radius: 10px;
    font-size: 18px;
    font-weight: 500;
    line-height: 28px;
    letter-spacing: 1px;
}

.members {
    background-color: #26243c;
    color: #6259dc;
}

.policies {
    background-color: #3c2a1a;
    color: #f59e1c;
}

.integrations {
    background-color: #1e3827;
    color: #34c759;
}

.expand {
    margin-left: 22px;
}

.expand svg {
    width: 35px;
    height: 35px;
}

/* Scrollbar */
.scrollbar {
    width: 10px;
}

.scrollbar-thumb {
    height: 77%;
    background-color: #6f6f70;
    border-radius: 0 0 4px 4px;
}
```
